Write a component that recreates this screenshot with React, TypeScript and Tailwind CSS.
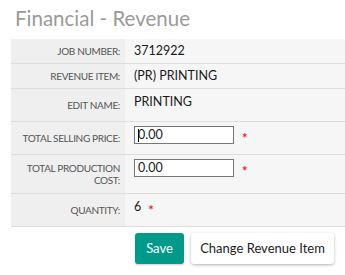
import React from "react";

const Label = ({ children }: { children: React.ReactNode }) => (
  <div className="flex items-center justify-end bg-[#efefef] pr-[5px] pl-2 text-right text-[10px] leading-[12px] tracking-[-0.35px] text-[#555]">
    <span>{children}</span>
  </div>
);

const Star = ({ className = "" }: { className?: string }) => (
  <span className={"text-[13px] leading-none font-bold text-[#ee1c25] " + className}>*</span>
);

export default function App() {
  return (
    <div className="h-[275px] w-[345px] overflow-hidden bg-white" style={{ fontFamily: "Lato, 'Noto Sans', sans-serif" }}>
      <div className="pl-[15px] pt-[6px] text-[20.5px] leading-[24px] text-[#9a9a9a]">Financial - Revenue</div>
      <div className="ml-[11px] mt-[9px] grid grid-cols-[114px_1fr] text-[12.5px] text-[#1a1a1a]">
        <div className="col-span-2 grid h-[24px] grid-cols-[114px_1fr]">
          <Label>JOB NUMBER:</Label>
          <div className="bg-[#f6f6f6] pl-[9px] pt-[4px] leading-[16px]">3712922</div>
        </div>
        <div className="col-span-2 grid h-[25px] grid-cols-[114px_1fr] border-t border-[#dddddd]">
          <Label>REVENUE ITEM:</Label>
          <div className="bg-[#f6f6f6] pl-[9px] pt-[4px] leading-[16px]">(PR) PRINTING</div>
        </div>
        <div className="col-span-2 grid h-[33px] grid-cols-[114px_1fr] border-t border-[#dddddd]">
          <Label>EDIT NAME:</Label>
          <div className="bg-[#f6f6f6] pl-[9px] pt-[5px] leading-[16px]">PRINTING</div>
        </div>
        <div className="col-span-2 grid h-[33px] grid-cols-[114px_1fr] border-t border-[#dddddd]">
          <Label>TOTAL SELLING PRICE:</Label>
          <div className="flex items-start bg-[#f6f6f6] pl-[9px] pt-[4px]">
            <div className="relative flex h-[18px] w-[100px] items-center border border-[#777] bg-white pl-[3px] leading-[16px]">
              0.00
              <span className="absolute left-[3px] top-[2px] h-[13px] w-px bg-black" />
            </div>
            <Star className="ml-[8px] mt-[6px]" />
          </div>
        </div>
        <div className="col-span-2 grid h-[39px] grid-cols-[114px_1fr] border-t border-[#dddddd]">
          <Label>
            TOTAL PRODUCTION
            <br />
            COST:
          </Label>
          <div className="flex items-start bg-[#f6f6f6] pl-[9px] pt-[4px]">
            <div className="flex h-[18px] w-[100px] items-center border border-[#777] bg-white pl-[3px] leading-[16px]">0.00</div>
            <Star className="ml-[8px] mt-[6px]" />
          </div>
        </div>
        <div className="col-span-2 grid h-[34px] grid-cols-[114px_1fr] border-y border-[#dddddd]">
          <Label>QUANTITY:</Label>
          <div className="flex items-start bg-[#f6f6f6] pl-[9px] pt-[5px] leading-[16px]">
            <span>6</span>
            <Star className="ml-[7px] mt-[5px]" />
          </div>
        </div>
      </div>
      <div className="mt-[6px] flex justify-end gap-[7px] pr-[11px]">
        <button className="h-[31px] w-[49px] rounded-[3px] bg-[#00998a] text-[13px] text-white shadow-[0_1px_2px_rgba(0,0,0,0.2)]">Save</button>
        <button className="h-[31px] w-[143px] rounded-[3px] bg-white text-[13px] text-[#222] shadow-[0_1px_3px_rgba(0,0,0,0.3)]">Change Revenue Item</button>
      </div>
    </div>
  );
}
